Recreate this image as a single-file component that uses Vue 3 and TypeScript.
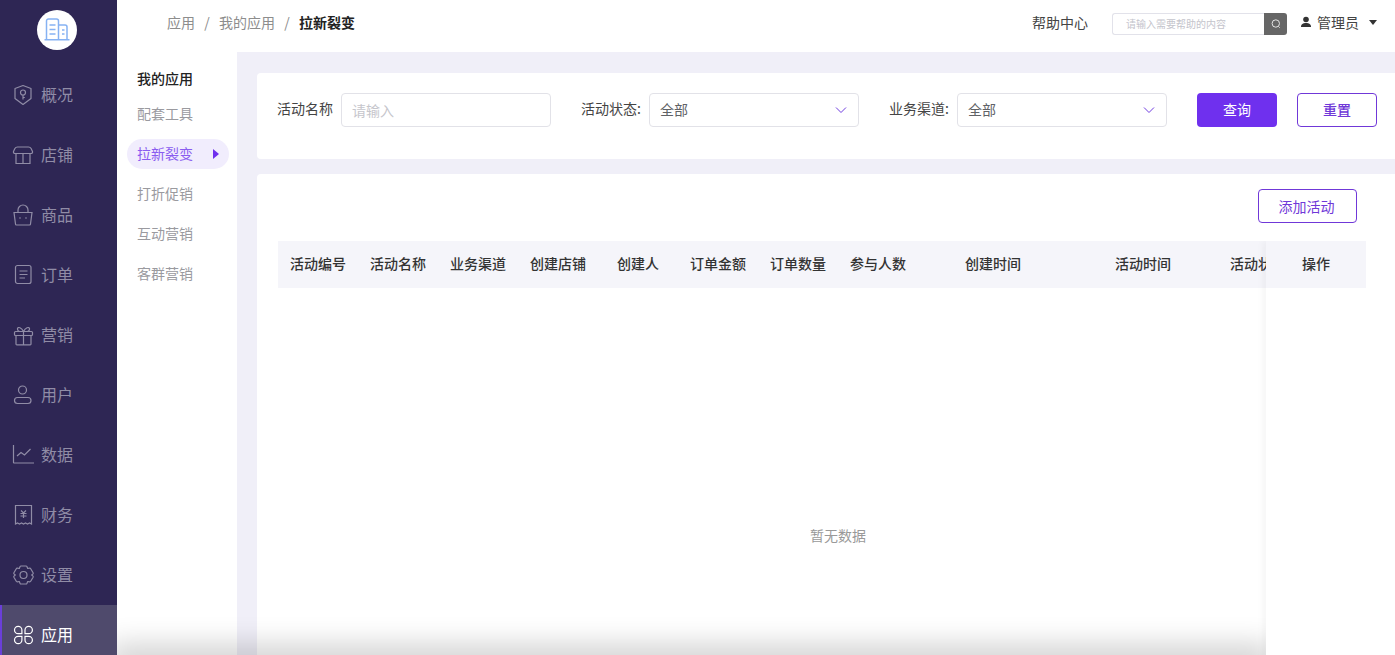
<script setup lang="ts">
const menu = ['概况','店铺','商品','订单','营销','用户','数据','财务','设置','应用']
const sub = ['配套工具','拉新裂变','打折促销','互动营销','客群营销']
const cols = [
  { t:'活动编号', w:80 },{ t:'活动名称', w:80 },{ t:'业务渠道', w:80 },{ t:'创建店铺', w:80 },{ t:'创建人', w:80 },
  { t:'订单金额', w:80 },{ t:'订单数量', w:80 },{ t:'参与人数', w:80 },{ t:'创建时间', w:150 },{ t:'活动时间', w:150 },{ t:'活动状态', w:80 },
]
</script>

<template>
  <div class="app">
    <aside class="aside">
      <div class="logo">
        <svg width="26" height="26" viewBox="0 0 26 26" fill="none" stroke="#86b2f3" stroke-width="1.5">
          <path d="M2.500 22.500V4a2 2 0 0 1 2-2h8a2 2 0 0 1 2 2v18.500M14.500 8h6.500a2 2 0 0 1 2 2v12.500M.5 22.800h25" />
          <path d="M5.500 8h6M5.500 12.500h6M5.500 17h6M18 13h2.500M18 17h2.500" />
        </svg>
      </div>
      <nav class="menu">
        <div v-for="(m,i) in menu" :key="m" class="mi" :class="{on:i===9}">
          <svg class="ic" width="24" height="24" viewBox="0 0 24 24" fill="none" stroke="currentColor" stroke-width="1.2">
            <template v-if="i===0"><path d="M12 2.500l8 3v10l-8 6-8-6v-10z" stroke-linejoin="round"/><circle cx="12" cy="9.500" r="2.500"/><path d="M12 12v4.500M12 14.500h1.800"/></template>
            <template v-else-if="i===1"><path d="M6.500 4h11a3 3 0 0 1 2.600 1.500l1.400 3a1.500 1.500 0 0 1-1.400 2H3.900a1.500 1.500 0 0 1-1.400-2l1.400-3A3 3 0 0 1 6.500 4zM5 10.500v10h14v-10M12 10.500v10"/></template>
            <template v-else-if="i===2"><path d="M3 9.500h18l-1.500 11.500a1 1 0 0 1-1 1H5.500a1 1 0 0 1-1-1zM7 9.500V7a5 5 0 0 1 10 0v2.500"/><circle cx="9" cy="15" r=".8" fill="currentColor" stroke="none"/><circle cx="15" cy="15" r=".8" fill="currentColor" stroke="none"/></template>
            <template v-else-if="i===3"><rect x="4.500" y="2.500" width="15.500" height="18" rx="2"/><path d="M8.500 8h8M8.500 11.500h8M8.500 15h5.500"/></template>
            <template v-else-if="i===4"><rect x="3.500" y="8.500" width="18" height="4" rx="1"/><path d="M5 12.500V21a.8.8 0 0 0 .8.8h13.400a.8.8 0 0 0 .8-.8v-8.500M12.500 8.500v13.300M12.500 8.500C10.500 4.500 7 3.500 6.500 5.500c-.3 1.500 1 3 2.500 3M12.500 8.500c2-4 5.500-5 6-3 .3 1.500-1 3-2.500 3"/></template>
            <template v-else-if="i===5"><circle cx="11.500" cy="7" r="4"/><rect x="3.500" y="14.500" width="16.500" height="6" rx="3"/></template>
            <template v-else-if="i===6"><path d="M2.500 2v17.500a.5.5 0 0 0 .5.5h20"/><path d="M6 13l4-3.500 3.500 2.500 6-6"/></template>
            <template v-else-if="i===7"><path d="M4.500 2.500h16V21l-2-1-2 1-2-1-2 1-2-1-2 1-2-1-2 1z"/><path d="M10 7.500l2.500 2.500 2.500-2.500M9.500 10.500h6M9.500 13h6M12.500 10v5"/></template>
            <template v-else-if="i===8"><path d="M10 3h5a1 1 0 0 1 .9.600l.8 1.900 2-.3a1 1 0 0 1 1 .5l2.400 4.100a1 1 0 0 1-.1 1.100L20.700 12l1.300 1.100a1 1 0 0 1 .1 1.100l-2.400 4.100a1 1 0 0 1-1 .5l-2-.3-.8 1.900a1 1 0 0 1-.9.600h-5a1 1 0 0 1-.9-.6l-.8-1.900-2 .3a1 1 0 0 1-1-.5l-2.400-4.100a1 1 0 0 1 .1-1.100L4.300 12 3 10.900a1 1 0 0 1-.1-1.100l2.400-4.100a1 1 0 0 1 1-.5l2 .3.800-1.900A1 1 0 0 1 10 3z" stroke-linejoin="round"/><circle cx="12.500" cy="12" r="3.500"/></template>
            <template v-else><path d="M3.500 7a3.700 3.700 0 0 1 7.400 0v3.700H7.200A3.700 3.700 0 0 1 3.500 7zM14 7a3.700 3.700 0 0 1 7.400 0 3.700 3.700 0 0 1-3.700 3.700H14zM3.500 17a3.700 3.700 0 0 1 3.700-3.700h3.700V17a3.700 3.700 0 0 1-7.400 0zM14 13.300h3.700a3.700 3.700 0 0 1 0 7.400A3.700 3.700 0 0 1 14 17z"/></template>
          </svg>
          <span>{{ m }}</span>
        </div>
      </nav>
    </aside>

    <div class="right">
      <header class="header">
        <div class="crumb">
          <span>应用</span><i>/</i><span>我的应用</span><i>/</i><b>拉新裂变</b>
        </div>
        <div class="tools">
          <span class="help">帮助中心</span>
          <div class="search">
            <div class="sinput">请输入需要帮助的内容</div>
            <div class="sbtn">
              <svg width="12" height="12" viewBox="0 0 12 12" fill="none" stroke="#e4e4e4"><circle cx="5.800" cy="5.500" r="3.700"/><path d="M8.500 8.500l1.200 1.200"/></svg>
            </div>
          </div>
          <div class="user">
            <svg width="12" height="12" viewBox="0 0 12 12" fill="#333"><circle cx="6" cy="3.500" r="2.800"/><path d="M1 11c0-3 2-4 5-4s5 1 5 4z"/></svg>
            <span>管理员</span>
            <i class="caret"></i>
          </div>
        </div>
      </header>

      <div class="body">
        <div class="sub">
          <div class="stitle">我的应用</div>
          <div v-for="(s,i) in sub" :key="s" class="sitem" :class="{on:i===1}">
            <span>{{ s }}</span><i v-if="i===1" class="tri"></i>
          </div>
        </div>

        <main class="main">
          <section class="filter">
            <div class="fi f1">
              <label>活动名称</label>
              <div class="inp ph">请输入</div>
            </div>
            <div class="fi f2">
              <label>活动状态:</label>
              <div class="inp sel"><span>全部</span>
                <svg width="12" height="8" viewBox="0 0 12 8" fill="none" stroke="#6f3ce0"><path d="M1 1.500l5 5 5-5"/></svg>
              </div>
            </div>
            <div class="fi f3">
              <label>业务渠道:</label>
              <div class="inp sel"><span>全部</span>
                <svg width="12" height="8" viewBox="0 0 12 8" fill="none" stroke="#6f3ce0"><path d="M1 1.500l5 5 5-5"/></svg>
              </div>
            </div>
            <button class="btn primary">查询</button>
            <button class="btn ghost">重置</button>
          </section>

          <section class="panel">
            <div class="bar"><button class="btn ghost add">添加活动</button></div>
            <div class="table">
              <div class="thead">
                <div v-for="c in cols" :key="c.t" class="th" :style="{width:c.w+'px'}">{{ c.t }}</div>
              </div>
              <div class="fixed"><div class="fh">操作</div></div>
            </div>
          </section>
        </main>
      </div>
      <div class="empty">暂无数据</div>
      <div class="shade"></div>
    </div>
  </div>
</template>

<style>
html, body { margin: 0; overflow: hidden; }
</style>

<style scoped>
.app { display: flex; width: 1395px; height: 655px; overflow: hidden; font-family: "Noto Sans CJK SC", "Noto Sans", sans-serif; font-size: 14px; color: #333; background: #f0eff8; }
.aside { width: 117px; flex: none; background: #2e2654; display: flex; flex-direction: column; position: relative; z-index: 3; }
.logo { width: 40px; height: 40px; flex: none; margin: 10px 0 15px 37px; border-radius: 50%; background: #fff; display: flex; align-items: center; justify-content: center; }
.mi { height: 60px; flex: none; display: flex; align-items: center; padding-left: 11px; gap: 6px; color: #908ca6; font-size: 16px; box-sizing: border-box; }
.mi span { margin-bottom: 2px; }
.mi.on { background: #4f4a6c; color: #fff; border-left: 2px solid #6a3fd8; padding-left: 9px; }
.ic { flex: none; }
.right { flex: 1; min-width: 0; position: relative; display: flex; flex-direction: column; }
.header { height: 52px; flex: none; background: #fff; display: flex; align-items: center; justify-content: space-between; padding: 0 18px 8px 50px; box-sizing: border-box; }
.crumb { display: flex; align-items: center; color: #8d8d8d; }
.crumb i { font-style: normal; width: 24px; text-align: center; }
.crumb b { color: #222; font-weight: 700; }
.tools { display: flex; align-items: center; }
.help { margin-right: 24px; color: #444; }
.search { display: flex; height: 22px; width: 175px; margin: 4px 13px 0 0; }
.sinput { flex: 1; border: 1px solid #e2e2ea; border-right: 0; border-radius: 3px 0 0 3px; font-size: 10px; color: #c4c4cc; line-height: 20px; padding-left: 13px; }
.sbtn { width: 23px; background: #666; border-radius: 0 3px 3px 0; display: flex; align-items: center; justify-content: center; }
.user { display: flex; align-items: center; gap: 5px; color: #444; }
.caret { width: 0; height: 0; border: 4px solid transparent; border-top: 5px solid #333; border-bottom: 0; margin-left: 5px; }
.body { flex: 1; display: flex; min-height: 0; }
.sub { width: 120px; flex: none; background: #fff; box-sizing: border-box; padding: 15px 8px 0 10px; color: #9a9a9f; }
.stitle { color: #222; font-weight: 500; height: 22px; line-height: 22px; padding-left: 10px; margin-bottom: 10px; }
.sitem { height: 30px; margin-bottom: 10px; padding-left: 10px; display: flex; align-items: center; justify-content: space-between; border-radius: 15px; }
.sitem span { margin-bottom: 2px; }
.sitem.on { background: #f1edfd; color: #8a5cf0; }
.tri { width: 0; height: 0; border: 5px solid transparent; border-left: 6px solid #6f30ee; border-right: 0; margin-right: 10px; }
.main { flex: 1; min-width: 0; padding: 21px 0 0 20px; }
.filter { height: 86px; background: #fff; border-radius: 4px 0 0 4px; display: flex; padding-top: 20px; box-sizing: border-box; }
.fi { display: flex; }
.fi label { color: #444; line-height: 30px; white-space: nowrap; }
.f1 { margin-left: 20px; }
.f1 label { margin-right: 8px; }
.f2 { margin-left: 30px; }
.f2 label, .f3 label { margin-right: 8px; width: 60px; }
.f3 { margin-left: 30px; }
.inp { width: 210px; height: 34px; box-sizing: border-box; border: 1px solid #e2e2e8; border-radius: 4px; padding-left: 10px; display: flex; align-items: center; justify-content: space-between; background: #fff; }
.inp span { margin-bottom: 2px; }
.ph { color: #c6c6cc; }
.sel { color: #606266; padding-right: 11px; }
.btn { width: 80px; height: 34px; border-radius: 4px; font: inherit; box-sizing: border-box; cursor: pointer; padding: 0 0 2px; }
.primary { background: #6f30ee; color: #fff; border: 0; margin-left: 30px; }
.ghost { background: #fff; color: #7038d8; border: 1px solid #7038d8; margin-left: 20px; font-weight: 500; }
.panel { margin-top: 15px; background: #fff; height: 520px; border-radius: 4px 0 0 0; box-sizing: border-box; }
.bar { height: 67px; padding: 15px 38px 0 0; display: flex; justify-content: flex-end; box-sizing: border-box; }
.add { margin: 0; width: 99px; padding: 0 2px 0 0; font-weight: 400; }
.table { position: relative; margin-left: 21px; width: 1088px; height: 440px; overflow: hidden; }
.thead { display: flex; height: 47px; background: #f5f5fa; width: 1088px; overflow: hidden; }
.th { flex: none; box-sizing: border-box; padding: 0 12px; line-height: 45px; font-weight: 500; color: #333; text-align: center; white-space: nowrap; }
.fixed { position: absolute; right: 0; top: 0; bottom: 0; width: 100px; background: #fff; box-shadow: -4px 0 6px rgba(0,0,0,.035); z-index: 2; }
.fh { height: 47px; line-height: 45px; text-align: center; background: #f5f5fa; font-weight: 500; color: #333; }
.empty { position: absolute; left: 161px; width: 1120px; top: 524px; text-align: center; color: #999; line-height: 22px; }
.shade { position: absolute; left: 0; width: 1148px; top: 655px; height: 10px; box-shadow: 0 0 30px 8px rgba(0,0,0,.22); z-index: 1; }
</style>
